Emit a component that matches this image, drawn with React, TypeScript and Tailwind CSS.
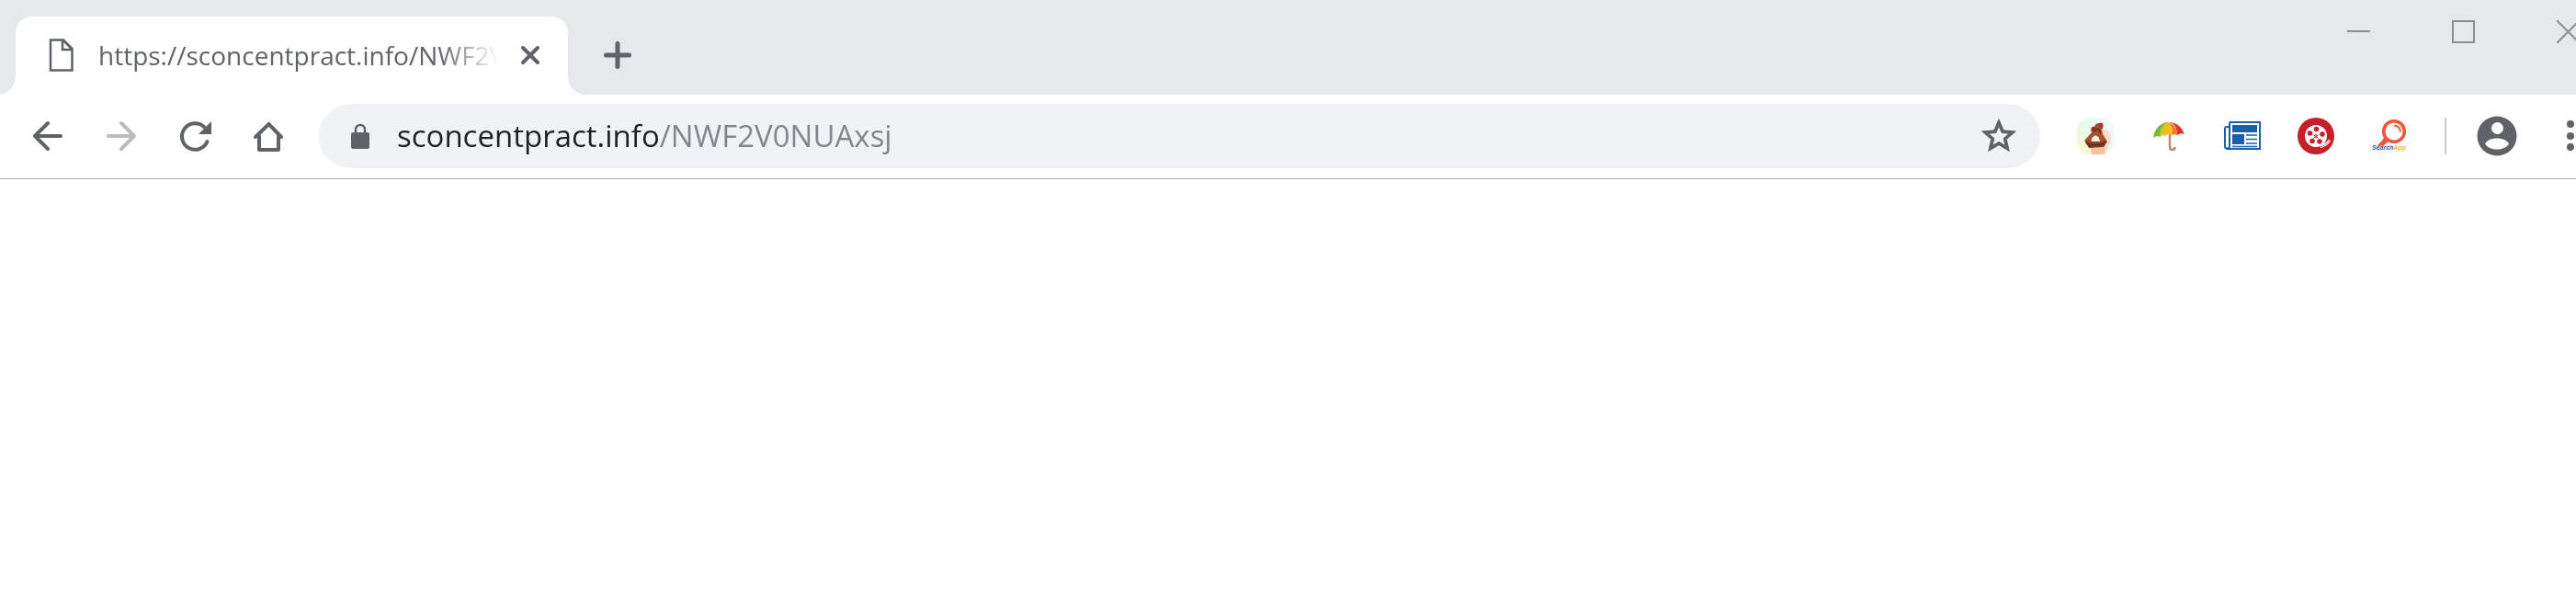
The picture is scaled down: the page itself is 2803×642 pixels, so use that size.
import { useState } from 'react';

const EXTENSIONS = [
  { id: 'hands', title: 'Hands', icon: HandsIcon },
  { id: 'umbrella', title: 'Umbrella', icon: UmbrellaIcon },
  { id: 'news', title: 'News', icon: NewsIcon },
  { id: 'movies', title: 'Movies', icon: ReelIcon },
  { id: 'search', title: 'Search', icon: SearchAppIcon },
];

function HandsIcon() {
  return (
    <svg viewBox="0 0 40 40" className="size-10">
      <defs>
        <linearGradient id="glow" x1="0" y1="1" x2="1" y2="0">
          <stop offset="0" stopColor="#fff6c4" />
          <stop offset="0.5" stopColor="#e6faf1" />
          <stop offset="1" stopColor="#f3fbf8" />
        </linearGradient>
        <linearGradient id="skin" x1="0" y1="0" x2="0" y2="1">
          <stop offset="0" stopColor="#9c4a2c" />
          <stop offset="0.6" stopColor="#a85630" />
          <stop offset="1" stopColor="#74361f" />
        </linearGradient>
      </defs>
      <rect width="40" height="40" rx="14" fill="url(#glow)" />
      <path d="M27 12c7 0 11 6 10 14l-5 12-7 2z" fill="#f8dcd0" />
      <path d="M14 30l17-1-1 11H16z" fill="#efc3a2" />
      <path
        fillRule="evenodd"
        d="M8 25l8-9c-2-3 0-6 3-6 1-4 5-5 7-3 3 0 3 4 1 6l1 5 5 8-4 6-16 1zM15.500 25.500h9.500l-2-4.500-3-1.500-3 2z"
        fill="url(#skin)"
      />
      <path d="M15.500 25.500h9.500l-2-4.500-3-1.500-3 2z" fill="#fffaf0" />
      <path d="M10 27l4 3 14-1 3-3" fill="none" stroke="#6a2d1b" strokeWidth="2" />
      <path d="M18 15l5-3 3 5" fill="none" stroke="#6a2d1b" strokeWidth="1.500" />
      <circle cx="26" cy="8" r="2.500" fill="#b5332e" />
      <circle cx="18" cy="12" r="2.300" fill="#a02b22" />
    </svg>
  );
}

function UmbrellaIcon() {
  return (
    <svg viewBox="0 0 40 40" className="size-10">
      <path d="M21 18v14c0 4 5.500 4 5.500 0" fill="none" stroke="#b98a78" strokeWidth="2.500" />
      <path d="M20 5C11 5 4 12 3 22c3-2 5-2 8-1 0-8 3-13 9-16z" fill="#7cb83a" />
      <path d="M20 5c-7 1-10 9-10 16 2-2 4-2 6-1 0-7 1-11 4-15z" fill="#c9cc2e" />
      <path d="M20 5c-4 3-5 9-5 15 3-2 6-2 8-1 0-6 0-11-3-14z" fill="#fbb91c" />
      <path d="M20 5c3 3 4 9 3 14 2-1 4-1 6 0 0-6-3-12-9-14z" fill="#f47a20" />
      <path d="M20 5c7 1 9 8 9 14 3-2 6-2 8-1C34 10 28 5 20 5z" fill="#e3342b" />
    </svg>
  );
}

function NewsIcon() {
  return (
    <svg viewBox="0 0 40 40" className="size-10">
      <path
        d="M6 5h33v29H4a3 3 0 0 1-3-3V12a2 2 0 0 1 2-2h3M6 5v26a2 2 0 0 1-3 2"
        fill="none"
        stroke="#1c5fa6"
        strokeWidth="2"
      />
      <path d="M9 8h27v8H9zM9 18h13v11H9z" fill="#1c5fa6" />
      <path d="M24 19h12M24 23.500h12M24 28h12M9 31.500h27" stroke="#1c5fa6" strokeWidth="1.500" />
    </svg>
  );
}

function ReelIcon() {
  return (
    <svg viewBox="0 0 40 40" className="size-10">
      <circle cx="20" cy="20" r="20" fill="#c4202b" />
      <circle cx="20" cy="20" r="12" fill="#fff" />
      <circle cx="20.500" cy="12.500" r="2.800" fill="#c4202b" />
      <circle cx="13.500" cy="17" r="2.800" fill="#c4202b" />
      <circle cx="27" cy="18" r="2.800" fill="#c4202b" />
      <circle cx="16" cy="25.500" r="2.800" fill="#c4202b" />
      <circle cx="24" cy="26" r="2.800" fill="#c4202b" />
      <path d="M20 17.500v5M17.500 19l5 3M22.500 19l-5 3" stroke="#c4202b" strokeWidth="1" />
      <path d="M25 31.500c5-1 8-4 10-7" fill="none" stroke="#fff" strokeWidth="3" />
      <path d="M26 31.500c4-1 7-4 9-7" fill="none" stroke="#c4202b" strokeWidth="1" strokeDasharray="1 1" />
    </svg>
  );
}

function SearchAppIcon() {
  return (
    <svg viewBox="0 0 40 40" className="size-10">
      <circle cx="25" cy="15" r="11.300" fill="none" stroke="#f0553a" strokeWidth="3.500" />
      <path d="M15 20l5 5-6 5c1 3-4 6-8 6l1-6 5-5z" fill="#f0553a" />
      <path d="M25 8.500c4 0 7 3 7 7" fill="none" stroke="#f0553a" strokeWidth="2" />
      <text
        x="1"
        y="35"
        fontFamily="Liberation Sans, sans-serif"
        fontSize="7"
        fontWeight="700"
        fontStyle="italic"
        stroke="#fff"
        strokeWidth="1"
        paintOrder="stroke"
      >
        <tspan fill="#2a56b0">Search</tspan>
        <tspan fill="#f5b143">App</tspan>
      </text>
    </svg>
  );
}

export default function App() {
  const [url, setUrl] = useState('sconcentpract.info/NWF2V0NUAxsj');

  return (
    <div className="w-full min-h-screen overflow-hidden bg-white font-['Open_Sans',sans-serif] text-[#5f6368]">
      {/* Tab strip */}
      <header className="flex h-[103px] items-end bg-[#e5e9ec] pl-[17px]">
        <div className="relative flex h-[85px] w-[601px] shrink-0 items-center rounded-t-[18px] bg-white pb-0.5 pl-9 pr-[19px]">
          <span className="absolute bottom-0 right-full size-[18px] bg-[radial-gradient(circle_at_0_0,transparent_17px,white_18px)]" />
          <span className="absolute bottom-0 left-full size-[18px] bg-[radial-gradient(circle_at_100%_0,transparent_17px,white_18px)]" />
          <button className="flex min-w-0 flex-1 items-center gap-[26px] text-left">
            <svg viewBox="0 0 28 36" className="h-9 w-7 shrink-0" fill="none" stroke="#5f6368" strokeWidth="2.500">
              <path d="M2 1.500h14l9.500 9.500v23.500H2zM15 1.500v10.500h10.500M16 2l9 9" />
            </svg>
            <span className="w-[439px] shrink-0 overflow-hidden whitespace-nowrap text-[28px] leading-10 mask-[linear-gradient(to_right,black_370px,transparent_436px)]">
              https://sconcentpract.info/NWF2V0NUAxsj
            </span>
          </button>
          <button aria-label="Close tab" className="flex size-11 shrink-0 items-center justify-center">
            <svg viewBox="0 0 24 24" className="size-6" stroke="#5f6368" strokeWidth="4" strokeLinecap="round">
              <path d="M4 4l16 16M20 4L4 20" />
            </svg>
          </button>
        </div>
        <button aria-label="New tab" className="ml-6 flex h-[85px] w-[60px] shrink-0 items-center justify-center pb-0.5">
          <svg viewBox="0 0 32 32" className="size-8" stroke="#5f6368" strokeWidth="5" strokeLinecap="round">
            <path d="M16 3.500v25M3.500 16h25" />
          </svg>
        </button>
        <div className="-mr-12 ml-auto flex self-start">
          <button aria-label="Minimize" className="flex h-[69px] w-[114px] items-center justify-center">
            <svg viewBox="0 0 25 25" className="size-[25px]" stroke="#8b8f92" strokeWidth="2">
              <path d="M0 12h25" />
            </svg>
          </button>
          <button aria-label="Maximize" className="flex h-[69px] w-[114px] items-center justify-center">
            <svg viewBox="0 0 25 25" className="size-[25px]" fill="none" stroke="#8b8f92" strokeWidth="2">
              <path d="M1 1h23v23H1z" />
            </svg>
          </button>
          <button aria-label="Close" className="flex h-[69px] w-[114px] items-center justify-center">
            <svg viewBox="0 0 25 25" className="size-[25px]" stroke="#8b8f92" strokeWidth="2">
              <path d="M0 0l25 25M25 0L0 25" />
            </svg>
          </button>
        </div>
      </header>

      {/* Toolbar */}
      <div className="flex h-[92px] items-center border-b border-[#b1b2b4] bg-white pb-0.5 pl-3">
        <button aria-label="Back" className="flex h-12 w-20 shrink-0 items-center justify-center">
          <svg viewBox="0 0 48 48" className="size-12" fill="none" stroke="#5f6368" strokeWidth="4" strokeLinecap="round" strokeLinejoin="round">
            <path d="M38 24H11M24 10L10 24l14 14" />
          </svg>
        </button>
        <button aria-label="Forward" disabled className="flex h-12 w-20 shrink-0 items-center justify-center">
          <svg viewBox="0 0 48 48" className="size-12" fill="none" stroke="#bbbcbe" strokeWidth="4" strokeLinecap="round" strokeLinejoin="round">
            <path d="M10 24h27M24 10l14 14-14 14" />
          </svg>
        </button>
        <button aria-label="Reload" className="flex h-12 w-20 shrink-0 items-center justify-center">
          <svg viewBox="0 0 48 48" className="size-12" fill="none" stroke="#5f6368" strokeWidth="4" strokeLinecap="round">
            <path d="M37.500 30A14.300 14.300 0 1 1 34 14" />
            <path d="M42 8v14H28z" fill="#5f6368" stroke="none" />
          </svg>
        </button>
        <button aria-label="Home" className="flex h-12 w-20 shrink-0 items-center justify-center">
          <svg viewBox="0 0 48 48" className="size-12" fill="none" stroke="#5f6368" strokeWidth="4" strokeLinecap="round" strokeLinejoin="round">
            <path d="M14 24v15h21V24" />
            <path d="M10 25L24.500 11 38 25" strokeLinejoin="miter" />
          </svg>
        </button>

        <div className="ml-[15px] flex h-[70px] min-w-0 flex-1 items-center rounded-full bg-[#f0f2f4] pl-[35px] pr-[21px]">
          <svg viewBox="0 0 20 28" className="h-7 w-5 shrink-0">
            <rect y="10" width="20" height="18" rx="2" fill="#5f6368" />
            <path d="M5 11V7a5 5 0 0 1 10 0v4" fill="none" stroke="#5f6368" strokeWidth="2.500" />
          </svg>
          {/* Host is dark, the path after it is dimmed */}
          <input
            aria-label="Address"
            spellCheck={false}
            value={url}
            onChange={(e) => setUrl(e.target.value)}
            className="ml-[30px] min-w-0 flex-1 bg-[linear-gradient(to_right,#202124_286px,#80868b_286px)] bg-clip-text text-[33px] leading-12 text-transparent caret-black outline-none"
          />
          <button aria-label="Bookmark" className="flex size-12 shrink-0 items-center justify-center">
            <svg viewBox="0 0 24 24" className="size-11" fill="#5f6368" stroke="#5f6368" strokeWidth="0.500">
              <path d="M22 9.240l-7.190-.620L12 2 9.190 8.630 2 9.240l5.460 4.730L5.820 21 12 17.270 18.180 21l-1.630-7.030zM12 15.400l-3.760 2.270 1-4.280-3.320-2.880 4.380-.380L12 6.100l1.710 4.040 4.380.380-3.320 2.880 1 4.280z" />
            </svg>
          </button>
        </div>

        <div className="ml-5 flex shrink-0">
          {EXTENSIONS.map((ext) => (
            <button key={ext.id} aria-label={ext.title} className="flex h-12 w-20 items-center justify-center">
              <ext.icon />
            </button>
          ))}
        </div>
        <span className="ml-5 mr-[15px] h-10 w-0.5 shrink-0 bg-[#cbcccd]" />
        <button aria-label="Profile" className="flex h-12 w-20 shrink-0 items-center justify-center">
          <svg viewBox="0 0 44 44" className="size-11">
            <circle cx="22" cy="22" r="21.500" fill="#5f6368" />
            <circle cx="22.500" cy="13.500" r="6.500" fill="#fff" />
            <path d="M9 30.500c4-8 22-8 26 0-5 8-21 8-26 0z" fill="#fff" />
          </svg>
        </button>
        <button aria-label="Menu" className="-mr-[34px] flex h-12 w-20 shrink-0 items-center justify-center">
          <svg viewBox="0 0 40 40" className="size-10" fill="#5f6368">
            <circle cx="20" cy="7" r="4" />
            <circle cx="20" cy="20" r="4" />
            <circle cx="20" cy="32" r="4" />
          </svg>
        </button>
      </div>

      <main className="bg-white" />
    </div>
  );
}
